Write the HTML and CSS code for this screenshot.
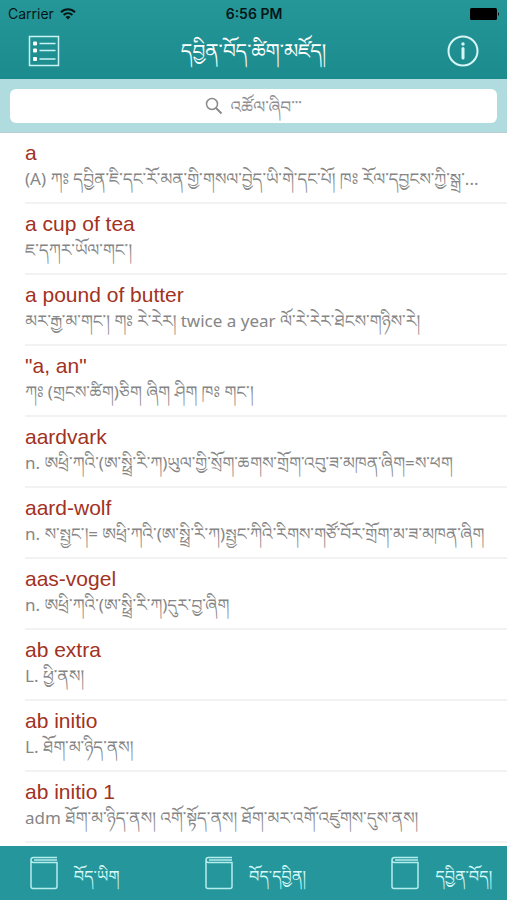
FILE: index.html
```html
<!DOCTYPE html>
<html lang="bo">

<head>
    <meta charset="UTF-8">
    <meta name="viewport" content="width=device-width, initial-scale=1.0">
    <title>དབྱིན་བོད་ཚིག་མཛོད།</title>
    <link rel="stylesheet" href="styles.css">
</head>

<body>
    <header class="header">
        <!-- status bar -->
        <div class="status">
            <div class="carrier">
                <span>Carrier</span>
                <svg width="16" height="12" viewBox="0 0 16 12" fill="none" stroke="#061616" stroke-width="2">
                    <path d="M1 4.3C5 .3 11 .3 15 4.3M3.6 7C6.200 4.600 9.800 4.600 12.400 7" />
                    <path d="M8 11.500L5.500 8.900Q8 7 10.500 8.900Z" fill="#061616" stroke="none" />
                </svg>
            </div>
            <span class="time">6:56 PM</span>
            <div class="battery">
                <svg width="30" height="12" viewBox="0 0 30 12">
                    <rect width="27" height="12" rx="1.500" />
                    <path d="M28 4Q30 6 28 8Z" />
                </svg>
            </div>
        </div>
        <!-- title bar -->
        <div class="nav">
            <button class="nav-btn" aria-label="list">
                <svg width="32" height="32" viewBox="0 0 32 32" fill="none" stroke="#c9f3f3" stroke-width="1.500">
                    <rect x="1.500" y="1.500" width="29" height="29" />
                    <path d="M11.500 8.500H27.500M11.500 15.500H27.500M11.500 24H27.500" />
                    <g fill="#fff" stroke="none">
                        <rect x="5" y="6.500" width="4" height="4" rx="1" />
                        <rect x="5" y="13.500" width="4" height="4" rx="1" />
                        <rect x="5" y="22" width="4" height="4" rx="1" />
                    </g>
                </svg>
            </button>
            <h1>དབྱིན་བོད་ཚིག་མཛོད།</h1>
            <button class="nav-btn" aria-label="info">
                <svg width="32" height="32" viewBox="0 0 32 32" fill="none" stroke="#d8f6f6">
                    <circle cx="16" cy="16" r="14.500" stroke-width="2" />
                    <path d="M16 13.500V23" stroke-width="3" stroke-linecap="round" />
                    <circle cx="16" cy="9" r="1.700" fill="#d8f6f6" stroke="none" />
                </svg>
            </button>
        </div>
    </header>

    <!-- search -->
    <div class="search">
        <label class="search-box">
            <svg width="18" height="18" viewBox="0 0 18 18" fill="none" stroke="#8a8a8a" stroke-width="1.500">
                <circle cx="7" cy="7" r="5.500" />
                <path d="M11 11L16.500 16.500" stroke-width="2" />
            </svg>
            <input type="text" placeholder="འཚོལ་ཞིབ་་་" aria-label="འཚོལ་ཞིབ">
        </label>
    </div>

    <!-- words -->
    <ul class="words">
        <li>
            <h2>a</h2>
            <p>(A) ཀཿ དབྱིན་ཇི་དང་རོ་མན་གྱི་གསལ་བྱེད་ཡི་གེ་དང་པོ། ཁཿ རོལ་དབྱངས་ཀྱི་སྒྲ་...</p>
        </li>
        <li>
            <h2>a cup of tea</h2>
            <p>ཇ་དཀར་ཡོལ་གང་།</p>
        </li>
        <li>
            <h2>a pound of butter</h2>
            <p>མར་རྒྱ་མ་གང་། གཿ རེ་རེར། twice a year ལོ་རེ་རེར་ཐེངས་གཉིས་རེ།</p>
        </li>
        <li>
            <h2>"a, an"</h2>
            <p>ཀཿ (གྲངས་ཚིག)ཅིག ཞིག ཤིག ཁཿ གང་།</p>
        </li>
        <li>
            <h2>aardvark</h2>
            <p>n. ཨཕྲི་ཀའི་(ཨ་སྥྲི་རི་ཀ)ཡུལ་གྱི་སྲོག་ཆགས་གྲོག་འབུ་ཟ་མཁན་ཞིག=ས་ཕག</p>
        </li>
        <li>
            <h2>aard-wolf</h2>
            <p>n. ས་སྤྱང་།= ཨཕྲི་ཀའི་(ཨ་སྥྲི་རི་ཀ)སྤྱང་ཀིའི་རིགས་གཙོ་བོར་གྲོག་མ་ཟ་མཁན་ཞིག</p>
        </li>
        <li>
            <h2>aas-vogel</h2>
            <p>n. ཨཕྲི་ཀའི་(ཨ་སྥྲི་རི་ཀ)དུར་བྱ་ཞིག</p>
        </li>
        <li>
            <h2>ab extra</h2>
            <p>L. ཕྱི་ནས།</p>
        </li>
        <li>
            <h2>ab initio</h2>
            <p>L. ཐོག་མ་ཉིད་ནས།</p>
        </li>
        <li>
            <h2>ab initio 1</h2>
            <p>adm ཐོག་མ་ཉིད་ནས། འགོ་སྟོད་ནས། ཐོག་མར་འགོ་འཛུགས་དུས་ནས།</p>
        </li>
    </ul>

    <!-- tabs -->
    <nav class="tabs">
        <a href="#">
            <svg width="28" height="34" viewBox="0 0 28 34" fill="none" stroke="#b5eded" stroke-width="1.500">
                <path d="M27 1.500H3.500Q1 1.500 1 4V30.500Q1 32.500 3 32.500H25Q27 32.500 27 30.500V6.500H3.500Q1 6.500 1 4M4 4H27" />
            </svg>
            <span>བོད་ཡིག</span>
        </a>
        <a href="#">
            <svg width="28" height="34" viewBox="0 0 28 34" fill="none" stroke="#b5eded" stroke-width="1.500">
                <path d="M27 1.500H3.500Q1 1.500 1 4V30.500Q1 32.500 3 32.500H25Q27 32.500 27 30.500V6.500H3.500Q1 6.500 1 4M4 4H27" />
            </svg>
            <span>བོད་དབྱིན།</span>
        </a>
        <a href="#">
            <svg width="28" height="34" viewBox="0 0 28 34" fill="none" stroke="#b5eded" stroke-width="1.500">
                <path d="M27 1.500H3.500Q1 1.500 1 4V30.500Q1 32.500 3 32.500H25Q27 32.500 27 30.500V6.500H3.500Q1 6.500 1 4M4 4H27" />
            </svg>
            <span>དབྱིན་བོད།</span>
        </a>
    </nav>
</body>

</html>
```

FILE: styles.css
```css
* {
    padding: 0;
    margin: 0;
    list-style: none;
    box-sizing: border-box;
}

body {
    display: flex;
    flex-direction: column;
    min-height: 100vh;
    background-color: #fff;
    font-family: "Noto Sans", "Noto Serif Tibetan", "Noto Sans Tibetan", Kailasa, sans-serif;
}

svg {
    display: block;
    flex-shrink: 0;
}

button {
    border: 0;
    background: none;
    cursor: pointer;
}

.header {
    height: 79px;
    background: linear-gradient(#269799, #1b8b8e);
}

.status {
    display: grid;
    grid-template-columns: 1fr auto 1fr;
    align-items: center;
    height: 28px;
    padding: 0 7px 0 8px;
    color: #061616;
    font: 14px/28px Inter, sans-serif;
}

.carrier {
    display: flex;
    align-items: center;
    gap: 6px;
}

.time {
    font-weight: 600;
}

.battery {
    display: flex;
    justify-content: flex-end;
}

.nav {
    display: flex;
    align-items: center;
    justify-content: space-between;
    height: 46px;
    padding: 0 28px;
}

.nav h1 {
    color: #fff;
    font-size: 20px;
    font-weight: 400;
    line-height: 46px;
}

.search {
    height: 54px;
    padding: 10px;
    background-color: #b0dce0;
    border-bottom: 1px solid #b8cfd1;
}

.search-box {
    display: flex;
    align-items: center;
    justify-content: center;
    gap: 8px;
    height: 34px;
    background-color: #fff;
    border-radius: 6px;
}

.search-box input {
    width: 72px;
    height: 34px;
    border: 0;
    outline: 0;
    background: none;
    font-family: inherit;
    font-size: 17px;
}

.search-box input::placeholder {
    color: #8e8e93;
}

.words {
    flex: 1;
    padding-left: 25px;
}

.words li {
    height: 71px;
    padding-top: 8px;
    border-bottom: 2px solid #f2f2f2;
}

.words h2 {
    color: #a23222;
    font: 21px/24px "Liberation Sans", sans-serif;
}

.words p {
    overflow: hidden;
    color: #868686;
    font-size: 17px;
    line-height: 28px;
    white-space: nowrap;
}

.tabs {
    display: flex;
    align-items: center;
    justify-content: space-between;
    height: 54px;
    padding: 0 15px 0 30px;
    background-color: #25979c;
}

.tabs a {
    display: flex;
    align-items: center;
    gap: 16px;
    color: #d5fafa;
    font-size: 16px;
    text-decoration: none;
}

.tabs span {
    padding-top: 16px;
}
```
